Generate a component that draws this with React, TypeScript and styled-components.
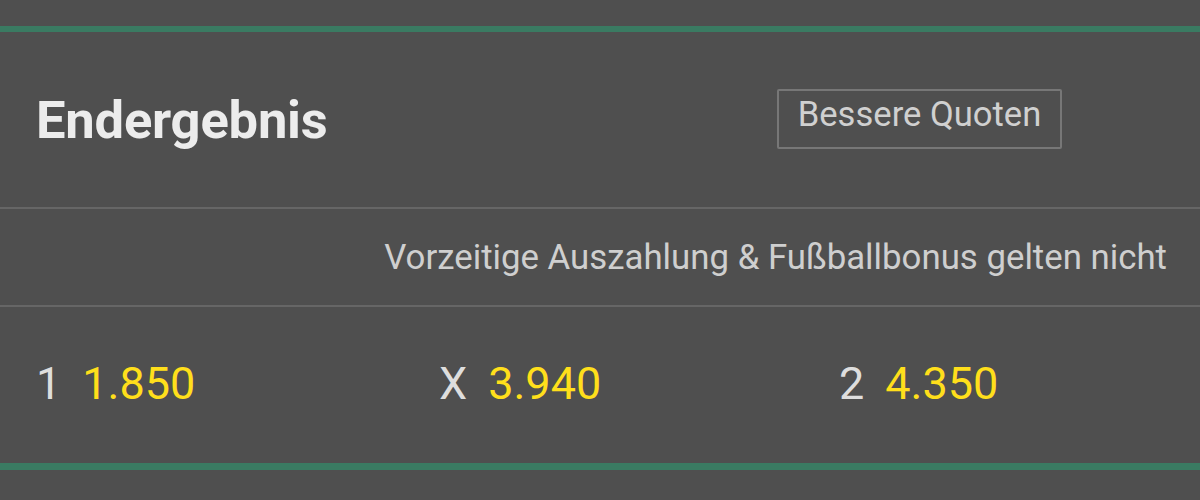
import React from 'react';
import styled, { createGlobalStyle } from 'styled-components';

// Types
interface Outcome {
  label: string;
  odds: string;
}

const outcomes: Outcome[] = [
  { label: '1', odds: '1.850' },
  { label: 'X', odds: '3.940' },
  { label: '2', odds: '4.350' },
];

const GlobalStyle = createGlobalStyle`
  html, body {
    margin: 0;
    padding: 0;
    background: #4f4f4f;
    font-family: Roboto, "Noto Sans", "Liberation Sans", sans-serif;
  }
`;

// Styled components
const Page = styled.div`
  width: 1200px;
  height: 500px;
  background: #4f4f4f;
  padding-top: 26px;
  box-sizing: border-box;
  overflow: hidden;
`;

const Market = styled.section`
  border-top: 6px solid #3a7b62;
  border-bottom: 7px solid #3a7b62;
`;

const Header = styled.div`
  height: 175px;
  display: flex;
  align-items: center;
  justify-content: space-between;
  padding: 0 138px 0 36px;
  border-bottom: 2px solid #666666;
`;

const Title = styled.h2`
  margin: 0;
  font-size: 52.5px;
  font-weight: 700;
  color: #ececec;
  letter-spacing: -0.2px;
`;

const OddsButton = styled.button`
  height: 60px;
  width: 285px;
  padding: 0 0 8px;
  margin-top: -2px;
  background: transparent;
  border: 2px solid #777777;
  border-radius: 2px;
  color: #d0d0d0;
  font-family: Roboto, "Noto Sans", sans-serif;
  font-size: 34.6px;
  line-height: 1;
`;

const Notice = styled.div`
  height: 96px;
  display: flex;
  align-items: center;
  justify-content: flex-end;
  padding-right: 33px;
  border-bottom: 2px solid #666666;
  font-size: 34.8px;
  color: #cfcfcf;
`;

const OddsRow = styled.div`
  height: 156px;
  display: grid;
  grid-template-columns: 403px 400px 397px;
  align-items: center;
`;

const Selection = styled.div`
  display: flex;
  align-items: baseline;
  gap: 21px;
  padding: 0 0 3px 36px;
  font-size: 45px;
`;

const Label = styled.span`
  color: #dedede;
`;

const Price = styled.span`
  color: #ffdf1b;
`;

// Component
const App: React.FC = () => (
  <>
    <GlobalStyle />
    <Page>
      <Market>
        <Header>
          <Title>Endergebnis</Title>
          <OddsButton>Bessere Quoten</OddsButton>
        </Header>
        <Notice>Vorzeitige Auszahlung &amp; Fußballbonus gelten nicht</Notice>
        <OddsRow>
          {outcomes.map((o) => (
            <Selection key={o.label}>
              <Label>{o.label}</Label>
              <Price>{o.odds}</Price>
            </Selection>
          ))}
        </OddsRow>
      </Market>
    </Page>
  </>
);

export default App;
